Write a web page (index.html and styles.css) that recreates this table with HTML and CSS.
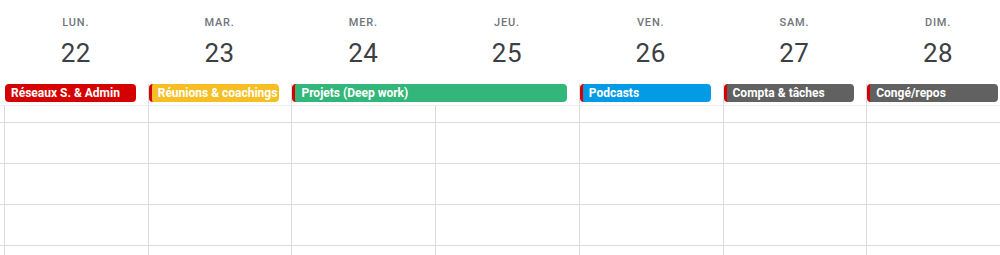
FILE: index.html
```html
<!DOCTYPE html>
<html lang="fr">
<head>
<meta charset="utf-8">
<title>Semaine</title>
<link rel="stylesheet" href="styles.css">
</head>
<body>
<div class="cal">
  <div class="head grid">
    <div class="day"><div class="dow">LUN.</div><div class="num">22</div></div>
    <div class="day"><div class="dow">MAR.</div><div class="num">23</div></div>
    <div class="day"><div class="dow">MER.</div><div class="num">24</div></div>
    <div class="day"><div class="dow">JEU.</div><div class="num">25</div></div>
    <div class="day"><div class="dow">VEN.</div><div class="num">26</div></div>
    <div class="day"><div class="dow">SAM.</div><div class="num">27</div></div>
    <div class="day"><div class="dow">DIM.</div><div class="num">28</div></div>
  </div>
  <div class="allday">
    <div class="grid">
      <div class="slot first"><div class="ev red">Réseaux S. &amp; Admin</div></div>
      <div class="slot"><div class="ev yellow strip">Réunions &amp; coachings</div></div>
      <div class="slot span2"><div class="ev green strip">Projets (Deep work)</div></div>
      <div class="slot"><div class="ev blue strip">Podcasts</div></div>
      <div class="slot"><div class="ev gray strip">Compta &amp; tâches</div></div>
      <div class="slot"><div class="ev gray strip">Congé/repos</div></div>
    </div>
  </div>
  <div class="row gap"><div class="grid cells"><div></div><div></div><div></div><div></div><div></div><div></div><div></div></div></div>
  <div class="row"><div class="grid cells"><div></div><div></div><div></div><div></div><div></div><div></div><div></div></div></div>
  <div class="row"><div class="grid cells"><div></div><div></div><div></div><div></div><div></div><div></div><div></div></div></div>
  <div class="row"><div class="grid cells"><div></div><div></div><div></div><div></div><div></div><div></div><div></div></div></div>
  <div class="row"><div class="grid cells"><div></div><div></div><div></div><div></div><div></div><div></div><div></div></div></div>
</div>
</body>
</html>
```
FILE: styles.css
```css
html, body {
  margin: 0;
  padding: 0;
  background: #ffffff;
  overflow: hidden;
}
body {
  font-family: Roboto, "Liberation Sans", Arial, sans-serif;
  width: 1000px;
  height: 255px;
}
.cal {
  width: 1000px;
  overflow: hidden;
}
.grid {
  display: grid;
  grid-template-columns: repeat(7, 143.71px);
  margin-left: 4px;
  width: 1006px;
}
.head {
  padding-top: 15px;
  height: 58px;
}
.day {
  text-align: center;
}
.dow {
  font-size: 11px;
  line-height: 16px;
  font-weight: 500;
  letter-spacing: 0.8px;
  color: #70757a;
}
.num {
  margin-top: 2px;
  font-size: 26px;
  line-height: 40px;
  color: #3c4043;
  letter-spacing: 0.5px;
}
.allday {
  padding-top: 11px;
  border-bottom: 1px solid #eceef0;
}
.slot {
  border-left: 1px solid #dadce0;
  padding: 0 12px 3px 0;
  min-width: 0;
}
.slot.first {
  border-left-color: transparent;
}
.span2 {
  grid-column: span 2;
}
.ev {
  height: 18px;
  line-height: 18px;
  border-radius: 4px;
  padding-left: 6px;
  font-size: 12px;
  font-weight: 700;
  color: #ffffff;
  white-space: nowrap;
  overflow: hidden;
}
.strip {
  border-left: 3px solid #d50000;
}
.red { background: #d50000; }
.yellow { background: #f6bf26; }
.green { background: #33b679; }
.blue { background: #039be5; }
.gray { background: #616161; }
.row {
  height: 40px;
  border-bottom: 1px solid #dadce0;
}
.row.gap {
  height: 16px;
}
.cells {
  height: 100%;
}
.cells > div {
  border-left: 1px solid #dadce0;
}
```
